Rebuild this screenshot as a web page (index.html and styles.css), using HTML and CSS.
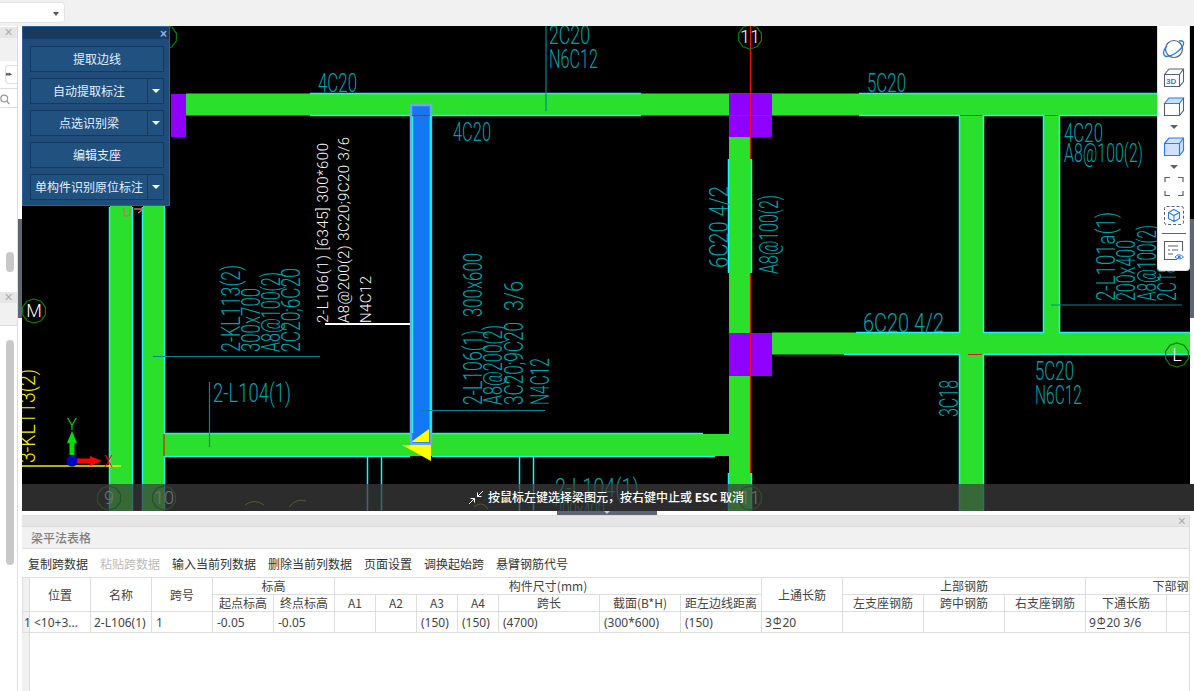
FILE: index.html
```html
<!DOCTYPE html>
<html lang="zh">
<head>
<meta charset="utf-8">
<title>梁平法表格</title>
<link rel="stylesheet" href="styles.css">
</head>
<body>
<header class="topbar">
  <div class="combo"><span class="caret"></span></div>
</header>
<div class="body">
  <aside class="side">
    <section class="side-a">
      <div class="side-head"><span class="x">×</span></div>
      <div class="side-sub"></div>
      <div class="side-tabrow"><span class="tabbtn">▸▸</span></div>
      <div class="side-search">
        <svg width="10" height="11" viewBox="0 0 10 11"><circle cx="4.2" cy="4.6" r="3.4" fill="none" stroke="#999" stroke-width="1.2"/><path d="M6.8 7.2 9.4 10" stroke="#999" stroke-width="1.3"/></svg>
      </div>
      <div class="thumb thumb-a"></div>
    </section>
    <section class="side-b">
      <div class="side-head"><span class="x">×</span></div>
      <div class="side-sub2"></div>
      <div class="thumb thumb-b"></div>
    </section>
    <div class="side-tab"></div>
  </aside>
  <main class="main">
    <div class="canvas">
      <svg class="cad" width="1172" height="485" viewBox="22 26 1172 485">
        <defs>
          <polygon id="gc" points="0,-12 7.05,-9.71 11.41,-3.71 11.41,3.71 7.05,9.71 0,12 -7.05,9.71 -11.41,3.71 -11.41,-3.71 -7.05,-9.71"/>
        </defs>
        <rect x="22" y="26" width="1172" height="485" fill="#000"/>
        <g class="g">
          <rect x="171" y="94" width="987" height="21"/>
          <rect x="110" y="115" width="22" height="396"/>
          <rect x="143" y="115" width="21" height="396"/>
          <rect x="164" y="434" width="565" height="22"/>
          <rect x="729" y="137" width="22" height="374"/>
          <rect x="772" y="333" width="418" height="21"/>
          <rect x="960" y="115" width="23" height="396"/>
          <rect x="1044" y="115" width="15" height="218"/>
        </g>
        <g class="dg">
          <path d="M186 93.500H310M641 93.500H859M772 332.500H856M772 354.500H844"/>
        </g>
        <g class="c">
          <path d="M109.500 207V511M132.500 207V511M142.500 207V511M164.500 115V434M164.500 456V511"/>
          <path d="M310 93.500H641M859 93.500H1158"/>
          <path d="M310 115.500H410M432 115.500H641M859 115.500H960M983 115.500H1044M1059 115.500H1158"/>
          <path d="M164 433.500H410M432 433.500H703M164 456.500H410M432 456.500H715"/>
          <path d="M728.500 159V273M751.500 159V273M728.500 473V511M751.500 473V511"/>
          <path d="M959.500 115V333M983.500 115V333M959.500 354V511M983.500 354V511M1043.500 115V333M1059.500 115V333"/>
          <path d="M856 332.500H960M983 332.500H1044M1059 332.500H1190M844 354.500H960M983 354.500H1190"/>
          <path d="M367.500 456V511M381.500 456V511M519.500 456V511M533.500 456V511"/>
        </g>
        <g class="r">
          <path d="M171 115.500H310M641 115.500H859M750.500 26V159M750.500 273V473M960 115.500H982M1045 115.500H1058M968 354.500H982M164 434V456"/>
        </g>
        <g class="p">
          <rect x="171" y="94" width="15" height="43"/>
          <rect x="729" y="94" width="43" height="43"/>
          <rect x="729" y="333" width="43" height="43"/>
        </g>
        <path class="r" d="M729 115.500H772M750.500 94V137M750.500 333V376"/>
        <rect class="sel" x="411" y="105" width="20" height="339"/>
        <path class="c" d="M412.500 116V433M430.500 116V433"/>
        <path class="r" d="M412 115.500H430"/>
        <path class="y" d="M411 442 429 429V442ZM402 445H431V461Z"/>
        <g class="lead">
          <path d="M546 26V111M209.500 382V447M153 356.500H320M421 410.500H545M1051 305H1182"/>
        </g>
        <path class="wl" d="M325 324H410"/>
        <g class="t">
          <text x="549" y="44" textLength="41" lengthAdjust="spacingAndGlyphs">2C20</text>
          <text x="549" y="68" textLength="49" lengthAdjust="spacingAndGlyphs">N6C12</text>
          <text x="318" y="92" textLength="39" lengthAdjust="spacingAndGlyphs">4C20</text>
          <text x="453" y="141" textLength="38" lengthAdjust="spacingAndGlyphs">4C20</text>
          <text x="867" y="92" textLength="39" lengthAdjust="spacingAndGlyphs">5C20</text>
          <text x="1064" y="142" textLength="39" lengthAdjust="spacingAndGlyphs">4C20</text>
          <text x="1064" y="162" textLength="79" lengthAdjust="spacingAndGlyphs">A8@100(2)</text>
          <text x="863" y="332" textLength="81" lengthAdjust="spacingAndGlyphs">6C20 4/2</text>
          <text x="1035" y="380" textLength="39" lengthAdjust="spacingAndGlyphs">5C20</text>
          <text x="1035" y="404" textLength="47" lengthAdjust="spacingAndGlyphs">N6C12</text>
          <text x="213" y="402" textLength="78" lengthAdjust="spacingAndGlyphs">2-L104(1)</text>
          <text transform="translate(958 417) rotate(-90)" textLength="37" lengthAdjust="spacingAndGlyphs">3C18</text>
          <text transform="translate(728 268) rotate(-90)" textLength="82" lengthAdjust="spacingAndGlyphs">6C20 4/2</text>
          <text transform="translate(778 274) rotate(-90)" textLength="79" lengthAdjust="spacingAndGlyphs">A8@100(2)</text>
          <text transform="translate(240 352) rotate(-90)" textLength="87" lengthAdjust="spacingAndGlyphs">2-KL113(2)</text>
          <text transform="translate(260 352) rotate(-90)" textLength="64" lengthAdjust="spacingAndGlyphs">300x700</text>
          <text transform="translate(280 352) rotate(-90)" textLength="80" lengthAdjust="spacingAndGlyphs">A8@100(2)</text>
          <text transform="translate(300 352) rotate(-90)" textLength="84" lengthAdjust="spacingAndGlyphs">2C20;6C20</text>
          <text transform="translate(482 405) rotate(-90)" textLength="75" lengthAdjust="spacingAndGlyphs">2-L106(1)</text>
          <text transform="translate(482 317) rotate(-90)" textLength="64" lengthAdjust="spacingAndGlyphs">300x600</text>
          <text transform="translate(502 405) rotate(-90)" textLength="80" lengthAdjust="spacingAndGlyphs">A8@200(2)</text>
          <text transform="translate(523 405) rotate(-90)" textLength="83" lengthAdjust="spacingAndGlyphs">3C20;9C20</text>
          <text transform="translate(523 311) rotate(-90)" textLength="30" lengthAdjust="spacingAndGlyphs">3/6</text>
          <text transform="translate(549 405) rotate(-90)" textLength="47" lengthAdjust="spacingAndGlyphs">N4C12</text>
          <text transform="translate(1115 301) rotate(-90)" textLength="89" lengthAdjust="spacingAndGlyphs">2-L101a(1)</text>
          <text transform="translate(1135 301) rotate(-90)" textLength="61" lengthAdjust="spacingAndGlyphs">200x400</text>
          <text transform="translate(1156 301) rotate(-90)" textLength="76" lengthAdjust="spacingAndGlyphs">A8@100(2)</text>
          <text transform="translate(1176 301) rotate(-90)" textLength="76" lengthAdjust="spacingAndGlyphs">2C18;6C20</text>
          <text x="555" y="497" textLength="84" lengthAdjust="spacingAndGlyphs">2-L104(1)</text>
          <text x="555" y="520" textLength="50" lengthAdjust="spacingAndGlyphs">200x400</text>
        </g>
        <g class="w">
          <text transform="translate(328 323) rotate(-90)" textLength="180">2-L106(1) [6345] 300*600</text>
          <text transform="translate(349 323) rotate(-90)" textLength="186">A8@200(2) 3C20;9C20 3/6</text>
          <text transform="translate(371 323) rotate(-90)" textLength="47">N4C12</text>
        </g>
        <text class="yt" transform="translate(35 463) rotate(-90)" textLength="94" lengthAdjust="spacingAndGlyphs">3-KL113(2)</text>
        <path class="yl" d="M22 466H121"/>
        <path class="sal" d="M124 208V214Q124 216 127 216Q130 216 130 214V208M134 209H142Q141 212 138 213"/>
        <path class="arcs" d="M245 505Q254 498 264 505M289 507Q296 498 306 501M474 507Q482 500 488 509"/>
        <path class="ax-g" d="M72 455V441"/>
        <path class="fill-g" d="M72 431 77 443H67Z"/>
        <path class="ax-r" d="M76 461H92"/>
        <path class="fill-r" d="M102 461 90 456V466Z"/>
        <circle cx="72" cy="461" r="5.500" class="fill-b"/>
        <text x="67" y="430" class="axl-g" textLength="10" lengthAdjust="spacingAndGlyphs">Y</text>
        <text x="104" y="467" class="axl-r" textLength="9" lengthAdjust="spacingAndGlyphs">X</text>
        <use href="#gc" x="34" y="311" class="bub"/>
        <use href="#gc" x="165" y="37" class="bub"/>
        <use href="#gc" x="750" y="37" class="bub"/>
        <use href="#gc" x="1177" y="355" class="bub"/>
        <use href="#gc" x="109" y="498" class="bub"/>
        <use href="#gc" x="164" y="498" class="bub"/>
        <use href="#gc" x="750" y="498" class="bub"/>
        <g class="bt">
          <text x="34" y="317" text-anchor="middle">M</text>
          <text x="750" y="43" text-anchor="middle">11</text>
          <text x="1177" y="361" text-anchor="middle">L</text>
          <text x="109" y="504" text-anchor="middle">9</text>
          <text x="164" y="504" text-anchor="middle">10</text>
          <text x="750" y="504" text-anchor="middle">11</text>
        </g>
        <rect x="1190" y="219" width="4" height="99" fill="#5e6672"/>
        <rect x="1190" y="318" width="4" height="166" fill="#fff"/>
      </svg>

      <div class="hint">
        <svg class="hint-ic" width="16" height="15" viewBox="0 0 16 15"><path d="M15 1 9.500 6.500M9.500 2.500V6.500H13.500M1 14 6.500 8.500M2.500 8.500H6.500V12.500" fill="none" stroke="#fff" stroke-width="1"/></svg>
        <span>按鼠标左键选择梁图元，按右键中止或 <b>ESC</b> 取消</span>
      </div>

      <div class="tool">
        <div class="tool-title"><span class="tool-x">×</span></div>
        <div class="tool-row"><button class="btn">提取边线</button></div>
        <div class="tool-row"><button class="btn">自动提取标注</button><button class="more"></button></div>
        <div class="tool-row"><button class="btn">点选识别梁</button><button class="more"></button></div>
        <div class="tool-row"><button class="btn">编辑支座</button></div>
        <div class="tool-row"><button class="btn">单构件识别原位标注</button><button class="more"></button></div>
      </div>

      <nav class="views">
        <svg width="22" height="20" viewBox="0 0 22 20"><circle cx="11" cy="10" r="8.500" fill="none" stroke="#56606e" stroke-width="1.200"/><path d="M4 7C-1 12 0 17.500 4 17.500 9 17.500 15.500 13 19.500 7.500 22 3.500 20 1 16 2" fill="none" stroke="#2b7de9" stroke-width="1.300"/></svg>
        <svg width="22" height="21" viewBox="0 0 22 21"><path d="M1.500 7.500H16.500V19.500H1.500ZM1.500 7.500 6 2H20.500V14.500L16.500 19.500M16.500 7.500 20.500 2" fill="none" stroke="#56606e" stroke-width="1.100"/><text x="3" y="17" class="ic3d">3D</text></svg>
        <svg width="22" height="21" viewBox="0 0 22 21"><path d="M1.500 7.500 6 2H20.500L16.500 7.500Z" fill="#c9defa" stroke="#2b7de9" stroke-width="1.100"/><path d="M1.500 7.500V19.500H16.500V7.500M16.500 19.500 20.500 14.500V2" fill="none" stroke="#56606e" stroke-width="1.100"/></svg>
        <span class="vcaret"></span>
        <svg width="22" height="21" viewBox="0 0 22 21"><path d="M1.500 7.500 6 2H20.500V14.500L16.500 19.500H1.500Z" fill="#cfe1fb" stroke="#2b7de9" stroke-width="1.200"/><path d="M1.500 7.500H16.500V19.500M16.500 7.500 20.500 2" fill="none" stroke="#2b7de9" stroke-width="1.200"/></svg>
        <span class="vcaret"></span>
        <svg width="22" height="21" viewBox="0 0 22 21"><path d="M2 6V1.500H7M15 1.500H20V6M20 15V19.500H15M7 19.500H2V15" fill="none" stroke="#56606e" stroke-width="1.200"/></svg>
        <svg width="22" height="21" viewBox="0 0 22 21"><rect x="1.500" y="1.500" width="19" height="18" rx="2" fill="none" stroke="#56606e" stroke-dasharray="3 2"/><path d="M11 4.500 16.500 7.500V13.500L11 16.500 5.500 13.500V7.500ZM5.500 7.500 11 10.500 16.500 7.500M11 10.500V16.500" fill="none" stroke="#2b7de9" stroke-width="1.100"/></svg>
        <span class="vsep"></span>
        <svg width="22" height="21" viewBox="0 0 22 21"><path d="M14 19.500H1.500V1.500H19.500V11" fill="none" stroke="#56606e" stroke-width="1.100"/><path d="M5 6H15M5 10H7M9 10H15M5 14H10" fill="none" stroke="#56606e"/><path d="M12 17Q16 12.500 20.500 17Q16 21 12 17Z" fill="#fff" stroke="#2b7de9"/><circle cx="16.200" cy="17" r="1.500" fill="#2b7de9"/></svg>
      </nav>
    </div>

    <div class="splitter"><span class="grip"></span></div>

    <section class="panel">
      <div class="panel-head"><span class="x">×</span></div>
      <div class="panel-title">梁平法表格</div>
      <div class="actions">
        <span>复制跨数据</span>
        <span class="off">粘贴跨数据</span>
        <span>输入当前列数据</span>
        <span>删除当前列数据</span>
        <span>页面设置</span>
        <span>调换起始跨</span>
        <span>悬臂钢筋代号</span>
      </div>
      <div class="grid">
        <table>
          <colgroup>
            <col class="c7"><col class="c61"><col class="c61"><col class="c61"><col class="c61"><col class="c61">
            <col class="c41"><col class="c41"><col class="c41"><col class="c41"><col class="c101"><col class="c81"><col class="c81">
            <col class="c81"><col class="c81"><col class="c81"><col class="c81"><col class="c81"><col class="c101">
          </colgroup>
          <thead>
            <tr>
              <th class="corner" rowspan="2"></th><th rowspan="2">位置</th><th rowspan="2">名称</th><th rowspan="2">跨号</th>
              <th colspan="2">标高</th><th colspan="7">构件尺寸(mm)</th><th rowspan="2">上通长筋</th>
              <th colspan="3">上部钢筋</th><th colspan="2">下部钢筋</th>
            </tr>
            <tr>
              <th>起点标高</th><th>终点标高</th><th>A1</th><th>A2</th><th>A3</th><th>A4</th><th>跨长</th><th>截面(B*H)</th><th>距左边线距离</th>
              <th>左支座钢筋</th><th>跨中钢筋</th><th>右支座钢筋</th><th>下通长筋</th><th></th>
            </tr>
          </thead>
          <tbody>
            <tr>
              <td class="num">1</td><td>&lt;10+3...</td><td class="tight">2-L106(1)</td><td>1</td><td>-0.05</td><td>-0.05</td>
              <td></td><td></td><td>(150)</td><td>(150)</td><td>(4700)</td><td>(300*600)</td><td>(150)</td>
              <td class="tight">3<i class="rebar">Φ</i>20</td><td></td><td></td><td></td><td class="tight">9<i class="rebar">Φ</i>20 3/6</td><td></td>
            </tr>
          </tbody>
        </table>
      </div>
    </section>
  </main>
</div>
</body>
</html>
```
FILE: styles.css
```css
* { box-sizing: border-box; }
html, body { margin: 0; padding: 0; height: 100%; overflow: hidden; }
body {
  width: 1194px; height: 691px; background: #fff; color: #333;
  font: 12px/1.2 "Noto Sans", "Noto Sans CJK SC", sans-serif;
  display: flex; flex-direction: column;
}
.topbar { height: 26px; flex: none; background: #f1f1f1; padding-top: 2px; }
.combo {
  width: 65px; height: 21px; background: #fff; border: 1px solid #e4e4e4; border-left: 0;
  border-radius: 0 4px 4px 0; position: relative;
}
.caret {
  position: absolute; right: 5px; top: 9px; width: 0; height: 0;
  border: 3px solid transparent; border-top: 4px solid #555; border-bottom: 0;
}
.body { flex: 1; display: flex; min-height: 0; }

/* left rail */
.side { width: 22px; flex: none; background: #fff; position: relative; display: flex; flex-direction: column; }
.side-a { height: 265px; width: 18px; border-right: 1px solid #ddd; position: relative; }
.side-b { flex: 1; width: 18px; border-right: 1px solid #ddd; position: relative; }
.side-head { height: 11px; margin-top: 1px; background: #e6e6e6; display: flex; justify-content: center; }
.x { color: #aaa; font: 14px/10px "Liberation Sans", sans-serif; }
.side-sub { height: 23px; background: #f1f1f1; }
.side-sub2 { height: 23px; background: #f1f1f1; border-bottom: 1px solid #ddd; }
.side-tabrow { height: 28px; border-bottom: 1px solid #ddd; padding: 4px 0 0 5px; }
.tabbtn {
  display: block; width: 12px; height: 19px; border: 1px solid #ddd; border-right: 0; border-radius: 4px 0 0 4px;
  color: #555; font: 7px/17px "DejaVu Sans", sans-serif; letter-spacing: -1px; overflow: hidden; white-space: nowrap;
}
.side-search { height: 19px; padding: 5px 0 0 0; border-bottom: 1px solid #ddd; line-height: 0; }
.thumb { position: absolute; left: 6px; width: 8px; background: #c9c9c9; border-radius: 4px; }
.thumb-a { top: 226px; height: 20px; }
.thumb-b { top: 49px; height: 225px; }
.side-tab { position: absolute; left: 18px; top: 193px; width: 4px; height: 99px; background: #5e6672; }

/* main column */
.main { flex: 1; min-width: 0; display: flex; flex-direction: column; }
.canvas { height: 485px; flex: none; position: relative; overflow: hidden; background: #000; }
.cad { display: block; }
.cad text { font-family: "Roboto", "Liberation Mono", sans-serif; font-weight: 300; }
.g rect { fill: #2be02d; }
.dg path { stroke: #157a15; fill: none; }
.c, .c path { stroke: #19f5f5; fill: none; stroke-width: 1.5; }
.r, .r path { stroke: #f01010; fill: none; stroke-width: 1.2; }
.p rect { fill: #8f00ff; }
.sel { fill: #1478f4; stroke: #6ea8ea; stroke-width: 2.5; }
.y { fill: #ffff00; }
.lead path { stroke: #008790; fill: none; stroke-width: 1.2; }
.wl { stroke: #fff; stroke-width: 2; fill: none; }
.t text { fill: #00a0a8; font-size: 25px; }
.cad .w text { fill: #fff; font-size: 15px; }
.yt { fill: #f0f000; font-size: 22px; }
.yl { stroke: #f0f000; stroke-width: 1.5; fill: none; }
.sal { stroke: #c8705a; stroke-width: 1.3; fill: none; }
.arcs { stroke: #a0a020; stroke-width: 1; fill: none; }
.ax-g { stroke: #00e000; stroke-width: 5; fill: none; }
.ax-r { stroke: #ff0000; stroke-width: 5; fill: none; }
.fill-g { fill: #00e000; }
.fill-r { fill: #ff0000; }
.fill-b { fill: #0000c8; }
.axl-g { fill: #00e000; font-size: 16px; }
.axl-r { fill: #ff0000; font-size: 16px; }
.bub { fill: none; stroke: #0a7a0a; stroke-width: 1.2; }
.cad .bt text { fill: #fff; font-size: 18px; }

.hint {
  position: absolute; left: 0; right: 0; bottom: 0; height: 27px;
  background: rgba(60, 60, 60, .73); color: #fff;
  display: flex; align-items: center; justify-content: center; gap: 4px;
  padding-right: 4px; font-weight: 500;
  font-family: "Noto Sans CJK SC", sans-serif;
}
.hint-ic { flex: none; }
.hint b { font-weight: 700; }

.tool {
  position: absolute; left: 0; top: 0; width: 148px; height: 180px;
  background: #1f4c7a; border: 1px solid #2c6096; padding-bottom: 5px;
}
.tool-title {
  height: 12px; background: #183a5e; margin-bottom: 7px; text-align: right; padding-right: 2px;
}
.tool-x { color: #8fb6e0; font: bold 12px/12px "Liberation Sans", sans-serif; }
.tool-row { display: flex; height: 26px; margin: 0 5px 6px 7px; }
.btn, .more {
  background: #20517f; border: 1px solid #173a5c; color: #e6effa; font: inherit;
  font-family: "Noto Sans CJK SC", sans-serif; padding: 0; white-space: nowrap;
}
.btn { flex: 1; min-width: 0; }
.more { width: 17px; flex: none; margin-left: -1px; position: relative; }
.more::after {
  content: ""; position: absolute; left: 4px; top: 10px; width: 0; height: 0;
  border: 4px solid transparent; border-top: 4px solid #fff; border-bottom: 0;
}

.views {
  position: absolute; right: 4px; top: 0; width: 33px; height: 245px;
  background: #fff; border: 1px solid #ddd; border-top: 0; border-radius: 0 0 4px 4px;
  display: flex; flex-direction: column; align-items: center; padding-top: 13px;
}
.views svg { flex: none; margin-bottom: 8px; }
.vcaret {
  flex: none; width: 0; height: 0; margin: 0 0 7px;
  border: 4px solid transparent; border-top: 4px solid #56606e; border-bottom: 0;
}
.vsep { flex: none; width: 24px; height: 1px; background: #666; margin: -1px 0 6px; }
.ic3d { fill: #2b7de9; font: bold 8px "Liberation Sans", sans-serif; }

.splitter { height: 4px; flex: none; background: #fff; display: flex; justify-content: center; padding-right: 2px; }
.grip { width: 100px; height: 4px; background: #5e6672; position: relative; }
.grip::after {
  content: ""; position: absolute; left: 47px; top: 0; width: 0; height: 0;
  border: 3px solid transparent; border-top: 3px solid #ccc; border-bottom: 0;
}

/* bottom panel */
.panel { flex: 1; min-height: 0; width: 1168px; display: flex; flex-direction: column; border-right: 1px solid #ddd; }
.panel-head { height: 12px; flex: none; background: #e6e6e6; border: 1px solid #ddd; border-width: 1px 0; display: flex; justify-content: flex-end; padding-right: 3px; }
.panel-title { height: 22px; flex: none; background: #f1f1f1; border-bottom: 1px solid #ddd; padding-left: 9px; color: #808080; font: 500 12px/22px "Noto Sans CJK SC", sans-serif; }
.actions { height: 28px; flex: none; display: flex; gap: 12px; align-items: center; padding: 2px 0 0 6px; color: #333; font-family: "Noto Sans CJK SC", sans-serif; white-space: nowrap; }
.off { color: #bbb; }
.grid { flex: 1; min-height: 0; overflow: hidden; background: linear-gradient(90deg, #f1f1f1 7px, #ddd 7px, #ddd 8px, #fff 8px); }
table { border-collapse: collapse; table-layout: fixed; width: 1245px; background: #fff; }
.c7 { width: 7px; }
.c41 { width: 41px; }
.c61 { width: 61px; }
.c81 { width: 81px; }
.c101 { width: 101px; }
th, td { border: 1px solid #ddd; padding: 0; white-space: nowrap; overflow: hidden; color: #444; }
th { height: 17px; font: 400 12px/16px "Noto Sans CJK SC", sans-serif; text-align: center; }
td { height: 21px; padding-left: 4px; font: 12px/19px "Noto Sans", "Noto Sans CJK SC", sans-serif; }
td.tight { padding-left: 3px; }
td.num { padding: 0 0 0 1px; background: #f1f1f1; }
th.corner { background: #f1f1f1; }
.rebar { font: 10px/1 "Noto Sans", sans-serif; border-bottom: 1px solid #444; margin: 0 1px; vertical-align: 2px; }
```
